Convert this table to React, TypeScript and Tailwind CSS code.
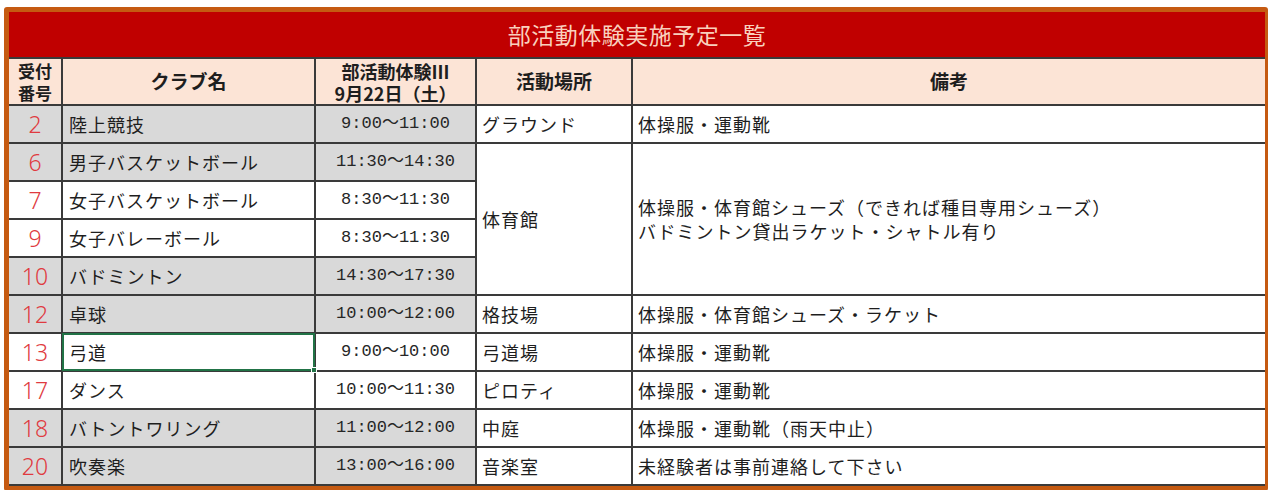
import React from "react"

type Row = { no: number; club: string; time: string; gray: boolean }

const rows: Row[] = [
  { no: 2, club: "陸上競技", time: "9:00～11:00", gray: true },
  { no: 6, club: "男子バスケットボール", time: "11:30～14:30", gray: true },
  { no: 7, club: "女子バスケットボール", time: "8:30～11:30", gray: false },
  { no: 9, club: "女子バレーボール", time: "8:30～11:30", gray: false },
  { no: 10, club: "バドミントン", time: "14:30～17:30", gray: true },
  { no: 12, club: "卓球", time: "10:00～12:00", gray: true },
  { no: 13, club: "弓道", time: "9:00～10:00", gray: false },
  { no: 17, club: "ダンス", time: "10:00～11:30", gray: false },
  { no: 18, club: "バトントワリング", time: "11:00～12:00", gray: true },
  { no: 20, club: "吹奏楽", time: "13:00～16:00", gray: true },
]

// place / note per row index; null = covered by the merged 体育館 block
const places: (string | null)[] = ["グラウンド", "体育館", null, null, null, "格技場", "弓道場", "ピロティ", "中庭", "音楽室"]
const notes: (string | null)[] = [
  "体操服・運動靴",
  "",
  null,
  null,
  null,
  "体操服・体育館シューズ・ラケット",
  "体操服・運動靴",
  "体操服・運動靴",
  "体操服・運動靴（雨天中止）",
  "未経験者は事前連絡して下さい",
]

const cell = "border-2 border-[#3a3a3a] p-0"

export default function App() {
  return (
    <div className="w-[1269px] h-[490px] bg-white overflow-hidden pt-[7px] pl-[4px]">
      <div
        className="w-[1264px] border-l-[5px] border-t-[5px] border-r-[3px] border-b-[5px] border-[#c55a11] rounded-[3px] bg-white"
        style={{ fontFamily: '"Noto Sans CJK JP", "Noto Sans", sans-serif' }}
      >
        <table className="w-[1256px] table-fixed border-collapse text-[#1e1e1e]">
          <colgroup>
            <col className="w-[53px]" />
            <col className="w-[253px]" />
            <col className="w-[161px]" />
            <col className="w-[156px]" />
            <col className="w-[633px]" />
          </colgroup>
          <tbody>
            <tr className="h-[46px]">
              <td colSpan={5} className="bg-[#c00000] text-center text-[23px] text-[#f9d0bd] border-b-2 border-[#3a3a3a] p-0 tracking-[0.5px]">
                部活動体験実施予定一覧
              </td>
            </tr>
            <tr className="h-[47px] bg-[#fce4d6] font-bold text-[19px]">
              <td className={`${cell} border-l-0 text-center text-[17px]`}>
                <div className="leading-[22px]">受付</div>
                <div className="leading-[22px]">番号</div>
              </td>
              <td className={`${cell} text-center`}>クラブ名</td>
              <td className={`${cell} text-center text-[18px]`}>
                <div className="leading-[22px]">部活動体験Ⅲ</div>
                <div className="leading-[22px]">9月22日（土）</div>
              </td>
              <td className={`${cell} text-center`}>活動場所</td>
              <td className={`${cell} border-r-0 text-center`}>備考</td>
            </tr>
            {rows.map((r, i) => {
              const bg = r.gray ? "bg-[#d9d9d9]" : "bg-white"
              return (
                <tr key={r.no} className="h-[38px]">
                  <td
                    className={`${cell} border-l-0 ${bg} text-center text-[23px] text-[#e03a40] font-light`}
                    style={{ fontFamily: '"Noto Sans", "Open Sans", sans-serif' }}
                  >
                    {r.no}
                  </td>
                  <td className={`${cell} ${bg} relative pl-[6px] text-[18px] tracking-[1px]`}>
                    {r.club}
                    {r.no === 13 && (
                      <div className="absolute -inset-[1px] border-2 border-[#217346] pointer-events-none">
                        <div className="absolute -right-[4px] -bottom-[4px] w-[6px] h-[6px] bg-[#217346] border border-white" />
                      </div>
                    )}
                  </td>
                  <td
                    className={`${cell} ${bg} text-center text-[17px] text-[#262626]`}
                    style={{ fontFamily: '"Liberation Mono", "Noto Sans CJK JP", monospace' }}
                  >
                    {r.time}
                  </td>
                  {places[i] !== null && (
                    <td rowSpan={i === 1 ? 4 : 1} className={`${cell} bg-white pl-[5px] text-[18px] tracking-[1px]`}>
                      {places[i]}
                    </td>
                  )}
                  {notes[i] !== null && (
                    <td rowSpan={i === 1 ? 4 : 1} className={`${cell} border-r-0 bg-white pl-[5px] text-[18px] tracking-[1px]`}>
                      {i === 1 ? (
                        <>
                          <div className="leading-[24px]">体操服・体育館シューズ（できれば種目専用シューズ）</div>
                          <div className="leading-[24px]">バドミントン貸出ラケット・シャトル有り</div>
                        </>
                      ) : (
                        notes[i]
                      )}
                    </td>
                  )}
                </tr>
              )
            })}
          </tbody>
        </table>
      </div>
    </div>
  )
}
